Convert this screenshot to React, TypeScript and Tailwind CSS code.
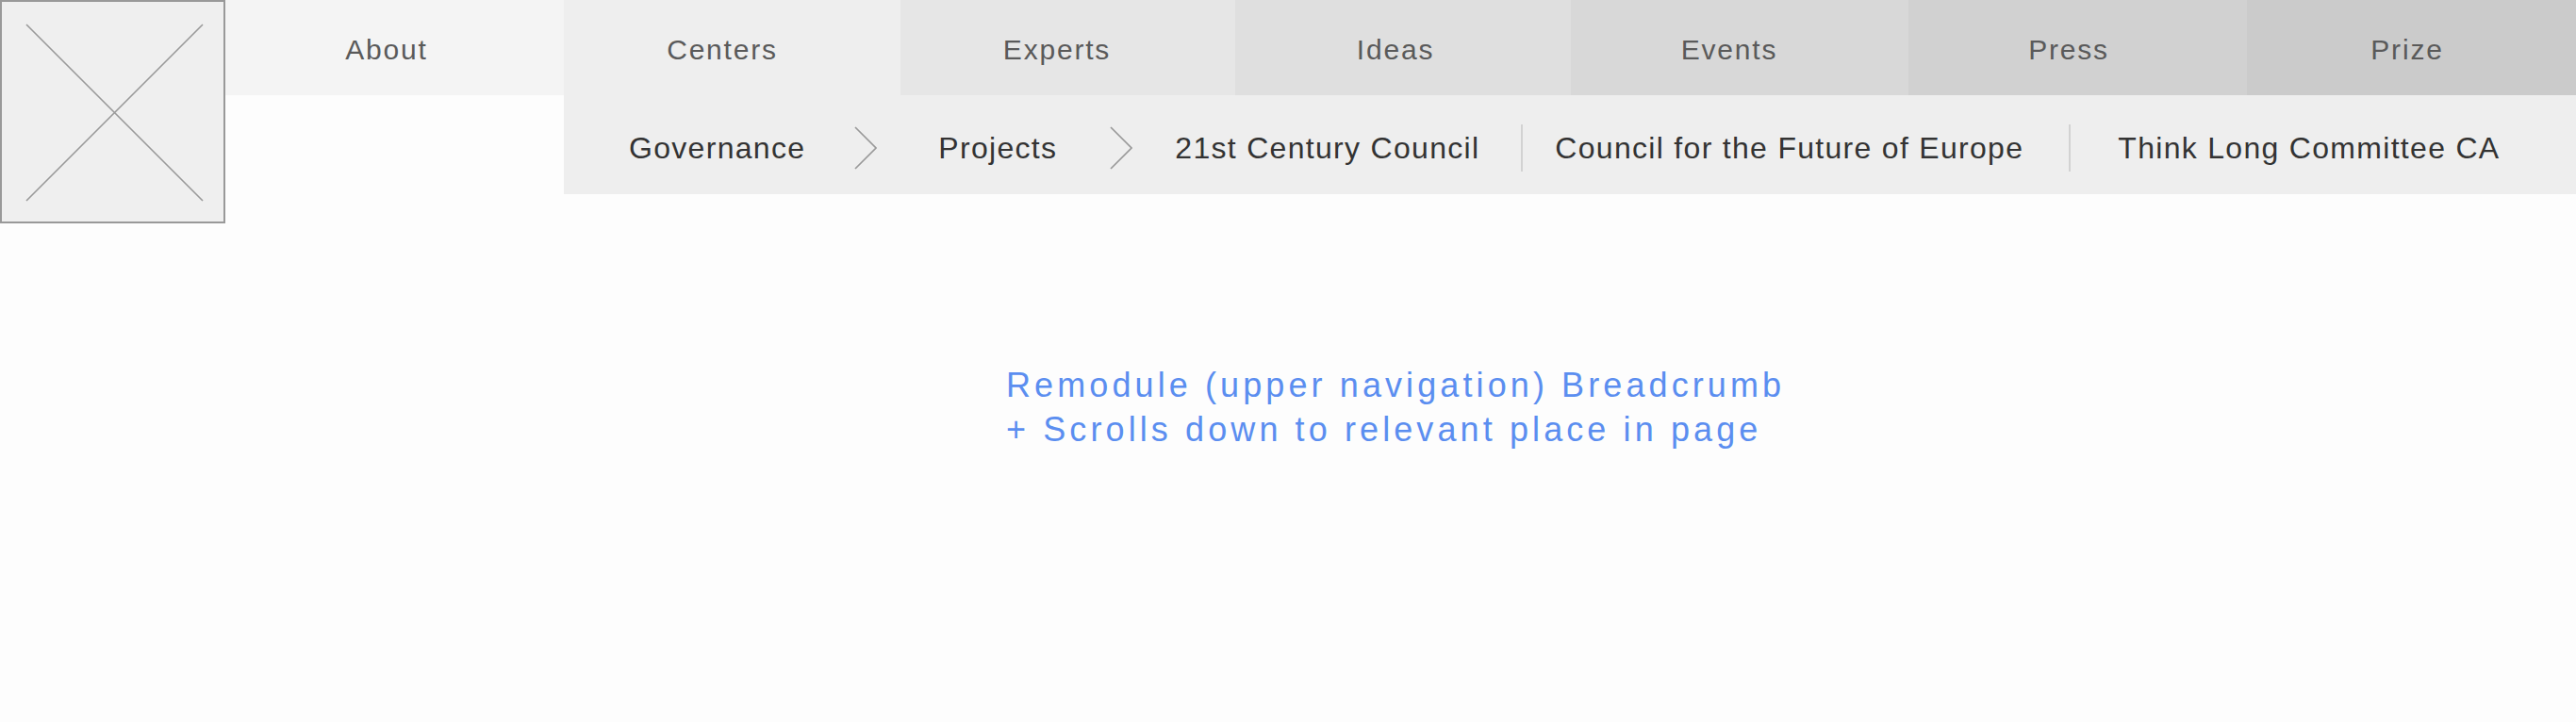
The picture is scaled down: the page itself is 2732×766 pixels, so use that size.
const topNav = [
  { label: 'About', bg: 'bg-[#f4f4f4]', pad: 'pr-[17px]' },
  { label: 'Centers', bg: 'bg-[#eeeeee]', pad: 'pr-[21px]' },
  { label: 'Experts', bg: 'bg-[#e6e6e6]', pad: 'pr-[23px]' },
  { label: 'Ideas', bg: 'bg-[#dfdfdf]', pad: 'pr-[16px]' },
  { label: 'Events', bg: 'bg-[#d8d8d8]', pad: 'pr-[22px]' },
  { label: 'Press', bg: 'bg-[#d1d1d1]', pad: 'pr-[19px]' },
  { label: 'Prize', bg: 'bg-[#cbcbcb]', pad: 'pr-[9px]' },
]

function Chevron() {
  return (
    <svg width="24" height="46" viewBox="0 0 24 46" fill="none" className="shrink-0">
      <path d="M1 1 L23 23 L1 45" stroke="#999999" strokeWidth="1.7" />
    </svg>
  )
}

function Divider() {
  return <div className="h-[50px] w-[2px] shrink-0 bg-[#d2d2d2]" />
}

function LogoPlaceholder() {
  return (
    <div className="box-border h-[237px] w-[239px] shrink-0 border-2 border-[#999999] bg-[#efefef]">
      <svg width="235" height="233" viewBox="0 0 235 233">
        <path d="M26 24 L213 211 M213 24 L26 211" stroke="#999999" strokeWidth="1.6" />
      </svg>
    </div>
  )
}

export default function App() {
  return (
    <div className="h-[766px] w-[2732px] overflow-hidden bg-[#fdfdfd] font-['Liberation_Sans',Arial,sans-serif]">
      <header className="flex">
        <LogoPlaceholder />
        <div className="flex min-w-0 flex-1 flex-col">
          <nav className="grid h-[101px] grid-cols-[359px_357px_355px_356px_358px_359px_minmax(0,1fr)]">
            {topNav.map((item) => (
              <a
                key={item.label}
                className={`flex items-center justify-center pt-[4px] text-[30px] leading-none tracking-[1.8px] text-[#5a5a5a] ${item.bg} ${item.pad}`}
              >
                {item.label}
              </a>
            ))}
          </nav>
          <div className="ml-[359px] flex h-[105px] items-center bg-[#eeeeee] pl-[69px] pt-[7px] text-[32px] leading-none tracking-[1.3px] text-[#333333]">
            <span>Governance</span>
            <span className="ml-[52px]">
              <Chevron />
            </span>
            <span className="ml-[65px]">Projects</span>
            <span className="ml-[56px]">
              <Chevron />
            </span>
            <span className="ml-[45px]">21st Century Council</span>
            <span className="ml-[44px]">
              <Divider />
            </span>
            <span className="ml-[34px]">Council for the Future of Europe</span>
            <span className="ml-[48px]">
              <Divider />
            </span>
            <span className="ml-[50px]">Think Long Committee CA</span>
          </div>
        </div>
      </header>
      <p className="ml-[1067px] mt-[148px] text-[36px] leading-[47px] tracking-[4.1px] text-[#5b8ef0]">
        Remodule (upper navigation) Breadcrumb
        <br />+ Scrolls down to relevant place in page
      </p>
    </div>
  )
}
